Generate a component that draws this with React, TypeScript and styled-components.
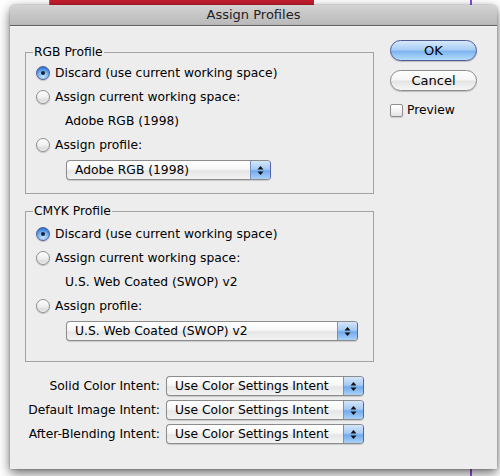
import React from "react";
import styled, { createGlobalStyle } from "styled-components";

const GlobalStyle = createGlobalStyle`
  html, body {
    margin: 0;
    padding: 0;
    background: #ffffff;
  }
  body {
    font-family: "DejaVu Sans", "Liberation Sans", sans-serif;
    font-size: 12.3px;
    color: #000;
  }
  * {
    box-sizing: border-box;
  }
`;

const Desktop = styled.div`
  position: relative;
  width: 500px;
  height: 476px;
  overflow: hidden;
  padding: 5px 0 0 10px;
  background: #ffffff;
`;

// window behind the sheet, peeking out at the top
const RedStrip = styled.div`
  position: absolute;
  left: 49px;
  top: 0;
  width: 265px;
  height: 14px;
  background: #c61f30;
  border-left: 1px solid #5b78d8;
`;

const PurpleRule = styled.div`
  position: absolute;
  left: 470px;
  top: 0;
  bottom: 0;
  width: 2px;
  background: #8b4fd6;
`;

const Dialog = styled.div`
  position: relative;
  width: 487px;
  height: 464px;
  background: #ededed;
  border-radius: 5px 5px 0 0;
  box-shadow: 0 4px 12px rgba(0, 0, 0, 0.6), 0 0 2px rgba(0, 0, 0, 0.35);
  display: flex;
  flex-direction: column;
`;

const TitleBar = styled.div`
  height: 21px;
  line-height: 20px;
  text-align: center;
  font-size: 13px;
  color: #222;
  background: linear-gradient(#d3d3d3, #b9b9b9);
  border-bottom: 1px solid #5f5f5f;
  border-radius: 5px 5px 0 0;
  box-shadow: 0 1px 0 #f6f6f6;
`;

const Body = styled.div`
  display: flex;
  padding: 14px 0 0 15px;
`;

const LeftColumn = styled.div`
  width: 349px;
  padding-top: 4px;
`;

const RightColumn = styled.div`
  width: 87px;
  margin-left: 16px;
  display: flex;
  flex-direction: column;
`;

const Group = styled.fieldset<{ $bottom: number; $top?: number; $pad?: number }>`
  margin: ${(p) => p.$top ?? 0}px 0 0 0;
  min-width: 0;
  border: 1px solid #a2a2a2;
  padding: ${(p) => p.$pad ?? 1}px 10px ${(p) => p.$bottom}px 10px;
`;

const Legend = styled.legend`
  padding: 0 1px;
  margin-left: -3px;
  line-height: 16px;
`;

const RadioRow = styled.label`
  display: flex;
  align-items: center;
  height: 24px;
  gap: 5px;
  white-space: nowrap;
`;

const Radio = styled.span<{ $on?: boolean }>`
  position: relative;
  width: 14px;
  height: 14px;
  border-radius: 50%;
  flex: none;
  border: 1px solid ${(p) => (p.$on ? "#4f5f97" : "#8e8e8e")};
  background: ${(p) =>
    p.$on
      ? "radial-gradient(circle at 50% 80%, #c6e2fb 0, #7cb4ee 45%, #3e7fd9 75%, #2a62b8 100%)"
      : "linear-gradient(#ffffff, #f0f0f0 50%, #dcdcdc 80%, #f4f4f4)"};
  box-shadow: 0 1px 1px rgba(0, 0, 0, 0.18);

  &::after {
    content: "";
    display: ${(p) => (p.$on ? "block" : "none")};
    position: absolute;
    left: 4px;
    top: 4px;
    width: 4px;
    height: 4px;
    border-radius: 50%;
    background: #15213d;
  }
`;

const Indented = styled.div`
  height: 24px;
  line-height: 24px;
  padding-left: 29px;
  white-space: nowrap;
`;

const PopupWrap = styled.div<{ $indent?: number }>`
  padding-left: ${(p) => p.$indent ?? 0}px;
  margin-top: 3px;
`;

const Popup = styled.div`
  display: flex;
  height: 20px;
  border: 1px solid #8c8c8c;
  border-right-color: #5761a6;
  border-radius: 4px;
  overflow: hidden;
  background: linear-gradient(#ffffff, #f7f7f7 45%, #e6e6e6 55%, #f3f3f3);
  box-shadow: 0 1px 1px rgba(0, 0, 0, 0.15);
`;

const PopupText = styled.span`
  flex: 1;
  padding-left: 8px;
  line-height: 18px;
  white-space: nowrap;
  overflow: hidden;
`;

const PopupArrows = styled.span`
  width: 20px;
  flex: none;
  display: flex;
  align-items: center;
  justify-content: center;
  border-left: 1px solid #7c8fc4;
  background: linear-gradient(#d4e6fa, #a6cbf3 45%, #72aaee 55%, #a8d2f7);
`;

const PushButton = styled.div<{ $primary?: boolean }>`
  height: 21px;
  line-height: 19px;
  text-align: center;
  border-radius: 11px;
  font-size: 13px;
  border: 1px solid ${(p) => (p.$primary ? "#4d5b9a" : "#8d8d8d")};
  background: ${(p) =>
    p.$primary
      ? "linear-gradient(#d7e9fb, #a9cdf4 45%, #7db5ef 55%, #b5dcfb)"
      : "linear-gradient(#ffffff, #f6f6f6 45%, #e4e4e4 55%, #f6f6f6)"};
  box-shadow: 0 1px 1px rgba(0, 0, 0, 0.2);
  & + & {
    margin-top: 9px;
  }
`;

const CheckRow = styled.label`
  display: flex;
  align-items: center;
  gap: 4px;
  margin-top: 12px;
  height: 14px;
`;

const CheckBox = styled.span`
  width: 13px;
  height: 13px;
  border: 1px solid #8e8e8e;
  border-radius: 2px;
  background: linear-gradient(#ffffff, #f1f1f1 60%, #e2e2e2);
  box-shadow: 0 1px 1px rgba(0, 0, 0, 0.15);
`;

const IntentGrid = styled.div`
  display: grid;
  grid-template-columns: 135px 198px;
  column-gap: 6px;
  row-gap: 4px;
  margin-top: 14px;
`;

const IntentLabel = styled.div`
  display: flex;
  justify-content: flex-end;
  align-items: center;
  white-space: nowrap;
`;

function Arrows() {
  return (
    <svg width="7" height="11" viewBox="0 0 7 11">
      <polygon points="3.5,1 6.5,4.5 0.5,4.5" fill="#111" />
      <polygon points="0.5,6.5 6.5,6.5 3.5,10" fill="#111" />
    </svg>
  );
}

function Select({ value, width }: { value: string; width: number }) {
  return (
    <Popup style={{ width }}>
      <PopupText>{value}</PopupText>
      <PopupArrows>
        <Arrows />
      </PopupArrows>
    </Popup>
  );
}

function ProfileGroup({
  title,
  working,
  popupWidth,
  bottom,
  top,
  pad,
}: {
  title: string;
  working: string;
  popupWidth: number;
  bottom: number;
  top?: number;
  pad?: number;
}) {
  return (
    <Group $bottom={bottom} $top={top} $pad={pad}>
      <Legend>{title}</Legend>
      <RadioRow>
        <Radio $on />
        Discard (use current working space)
      </RadioRow>
      <RadioRow>
        <Radio />
        Assign current working space:
      </RadioRow>
      <Indented>{working}</Indented>
      <RadioRow>
        <Radio />
        Assign profile:
      </RadioRow>
      <PopupWrap $indent={30}>
        <Select value={working} width={popupWidth} />
      </PopupWrap>
    </Group>
  );
}

const intents = ["Solid Color Intent:", "Default Image Intent:", "After-Blending Intent:"];

export default function App() {
  return (
    <>
      <GlobalStyle />
      <Desktop>
        <RedStrip />
        <PurpleRule />
        <Dialog>
          <TitleBar>Assign Profiles</TitleBar>
          <Body>
            <LeftColumn>
              <ProfileGroup
                title="RGB Profile"
                working="Adobe RGB (1998)"
                popupWidth={205}
                bottom={13}
              />
              <ProfileGroup
                title="CMYK Profile"
                working="U.S. Web Coated (SWOP) v2"
                popupWidth={292}
                bottom={20}
                top={9}
                pad={3}
              />
              <IntentGrid>
                {intents.map((label) => (
                  <React.Fragment key={label}>
                    <IntentLabel>{label}</IntentLabel>
                    <Select value="Use Color Settings Intent" width={198} />
                  </React.Fragment>
                ))}
              </IntentGrid>
            </LeftColumn>
            <RightColumn>
              <PushButton $primary>OK</PushButton>
              <PushButton>Cancel</PushButton>
              <CheckRow>
                <CheckBox />
                Preview
              </CheckRow>
            </RightColumn>
          </Body>
        </Dialog>
      </Desktop>
    </>
  );
}
